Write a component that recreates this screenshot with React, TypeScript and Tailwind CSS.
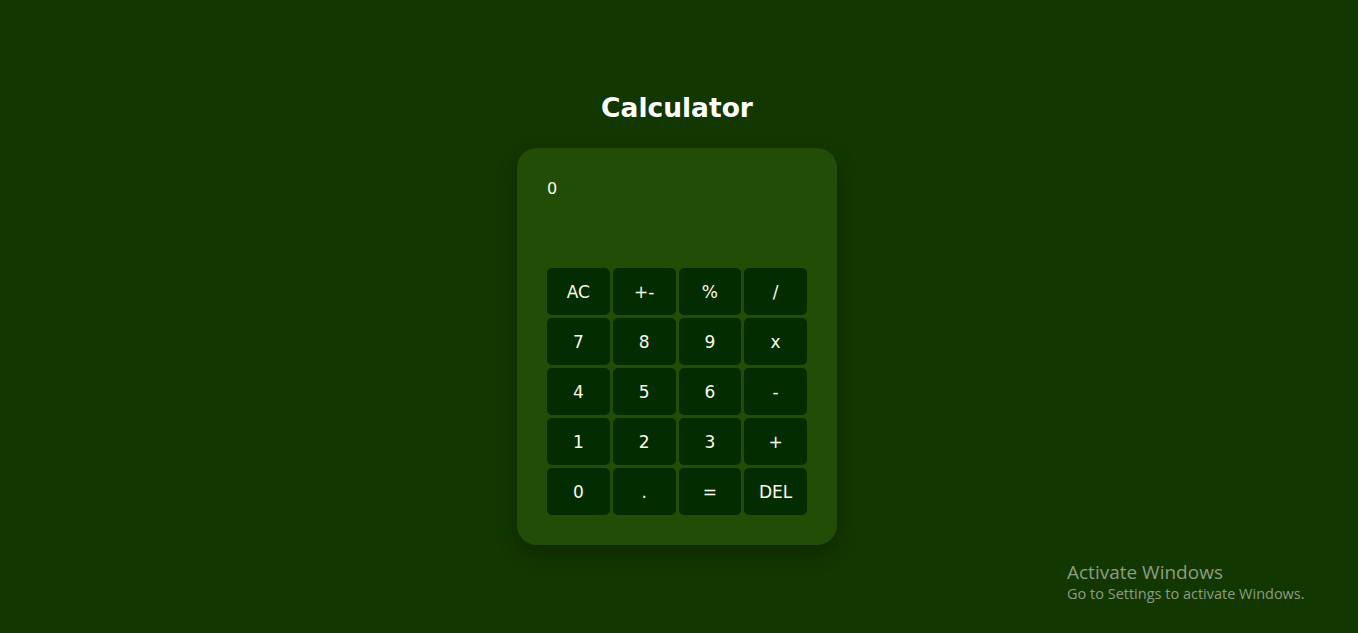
import React, { useState } from 'react';

const keys = ['AC', '+-', '%', '/', '7', '8', '9', 'x', '4', '5', '6', '-', '1', '2', '3', '+', '0', '.', '=', 'DEL'];

export default function App() {
  const [display, setDisplay] = useState('0');

  const press = (k: string) => {
    if (k === 'AC') return setDisplay('0');
    if (k === 'DEL') return setDisplay(display.length > 1 ? display.slice(0, -1) : '0');
    if (k === '=') {
      try {
        const v = Function(`return (${display.replace(/x/g, '*')})`)();
        setDisplay(String(v));
      } catch {
        setDisplay('Error');
      }
      return;
    }
    if (k === '+-') return setDisplay(display.startsWith('-') ? display.slice(1) : '-' + display);
    setDisplay(display === '0' ? k : display + k);
  };

  return (
    <div className="relative min-h-screen bg-[#133700] flex flex-col items-center pr-[4px] font-['DejaVu_Sans',Verdana,sans-serif] text-[#fbfbe8]">
      <h1 className="mt-[90px] mb-[22px] text-[26.5px] font-bold leading-[36px] text-white">Calculator</h1>
      <div className="w-[320px] rounded-[20px] bg-[#224d06] p-[30px] shadow-[0_8px_20px_rgba(0,0,0,0.25)]">
        <div className="h-[90px] pt-[1px] text-[16px] leading-[20px]">{display}</div>
        <div className="grid grid-cols-4 gap-[3px]">
          {keys.map((k) => (
            <button
              key={k}
              onClick={() => press(k)}
              className="h-[47px] pt-[2px] rounded-[5px] bg-[#032c00] text-[17px] text-[#fbfbe8] hover:bg-[#0a3a05]"
            >
              {k}
            </button>
          ))}
        </div>
      </div>
      <div className="absolute left-[1067px] top-[560px] font-['Open_Sans',sans-serif] text-[#8b9d85]">
        <div className="text-[19px] leading-[24px]">Activate Windows</div>
        <div className="text-[14.5px] leading-[20px]">Go to Settings to activate Windows.</div>
      </div>
    </div>
  );
}
